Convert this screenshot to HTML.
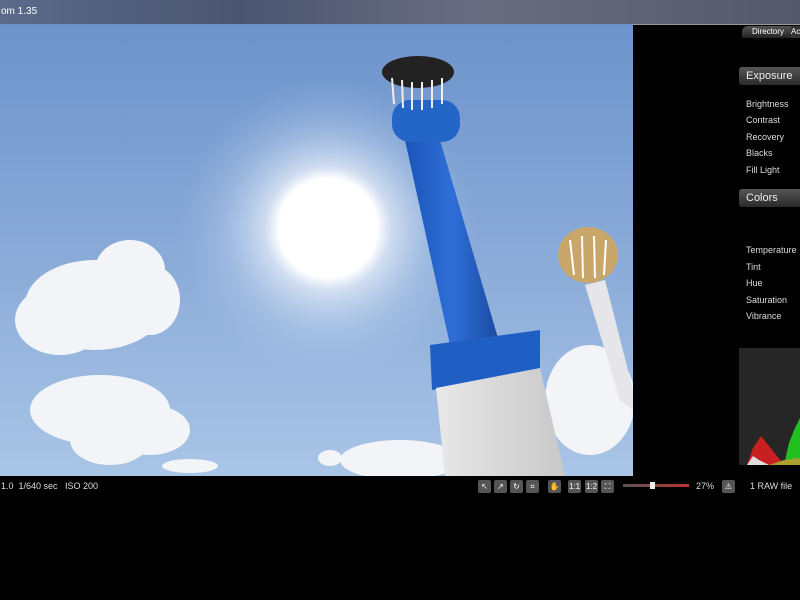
<!DOCTYPE html>
<html><head><style>
body{margin:0;width:800px;height:600px;background:#000;overflow:hidden;position:relative;font-family:"Liberation Sans",sans-serif;}
.abs{position:absolute;}
.title{left:0;top:0;width:800px;height:24px;background:linear-gradient(90deg,#5a6a8a,#4a5570 30%,#6a6d80 60%,#55586a);border-bottom:1px solid #999;}
.title span{position:absolute;left:1px;top:6px;color:#fff;font-size:10px;}
.photo{left:0;top:24px;width:633px;height:452px;background:linear-gradient(180deg,#6d93cb 0%,#89aad8 50%,#a9c5e6 100%);overflow:hidden;}
.lbl{color:#ddd;font-size:9px;position:absolute;left:746px;}
.hdr{position:absolute;left:739px;width:61px;height:18px;background:linear-gradient(180deg,#555,#2a2a2a);color:#eee;font-size:11px;padding-left:7px;line-height:18px;border-radius:3px 0 0 3px;}
.btn{position:absolute;top:480px;width:13px;height:13px;background:#555;border-radius:2px;color:#fff;font-size:8px;text-align:center;line-height:13px;}
.bar{color:#ddd;font-size:9px;position:absolute;top:481px;}
</style></head><body>
<div class="abs title"><span>om 1.35</span></div>
<div class="abs photo">
<svg width="633" height="452" viewBox="0 24 633 452">
<defs>
<radialGradient id="sun" cx="328" cy="228" r="150" gradientUnits="userSpaceOnUse">
<stop offset="0" stop-color="#fff"/><stop offset="0.33" stop-color="#fff"/><stop offset="0.42" stop-color="#eef3fb" stop-opacity="0.7"/><stop offset="0.7" stop-color="#c8daf1" stop-opacity="0.3"/><stop offset="1" stop-color="#a8c4e8" stop-opacity="0"/></radialGradient>
<linearGradient id="tw" x1="0" x2="1"><stop offset="0" stop-color="#1a55b8"/><stop offset="0.5" stop-color="#2f6fd8"/><stop offset="1" stop-color="#1a4aa0"/></linearGradient>
<linearGradient id="wt" x1="0" x2="1"><stop offset="0" stop-color="#e8e8e8"/><stop offset="1" stop-color="#c8c8c8"/></linearGradient>
</defs>
<circle cx="328" cy="228" r="150" fill="url(#sun)"/>
<g fill="#f2f4f8">
<ellipse cx="95" cy="305" rx="70" ry="45"/><ellipse cx="130" cy="270" rx="35" ry="30"/><ellipse cx="60" cy="320" rx="45" ry="35"/><ellipse cx="150" cy="300" rx="30" ry="35"/>
<ellipse cx="100" cy="410" rx="70" ry="35"/><ellipse cx="150" cy="430" rx="40" ry="25"/><ellipse cx="110" cy="440" rx="40" ry="25"/><ellipse cx="190" cy="466" rx="28" ry="7"/>
<ellipse cx="590" cy="400" rx="45" ry="55"/><ellipse cx="400" cy="460" rx="60" ry="20"/><ellipse cx="330" cy="458" rx="12" ry="8"/>
</g>
<polygon points="405,140 440,140 500,345 450,345" fill="url(#tw)"/>
<rect x="392" y="100" width="68" height="42" rx="18" fill="#2466c8"/>
<ellipse cx="418" cy="72" rx="36" ry="16" fill="#222"/>
<g stroke="#eee" stroke-width="2"><line x1="392" y1="78" x2="394" y2="104"/><line x1="402" y1="80" x2="403" y2="108"/><line x1="412" y1="82" x2="412" y2="110"/><line x1="422" y1="82" x2="422" y2="110"/><line x1="432" y1="80" x2="432" y2="108"/><line x1="442" y1="78" x2="442" y2="104"/></g>
<path d="M430 345 L540 330 L540 370 L432 390 Z" fill="#1f5fc4"/>
<polygon points="436,388 540,368 565,476 445,476" fill="url(#wt)"/>
<polygon points="585,285 605,280 633,390 633,410 620,400" fill="#e6e6ea"/>
<ellipse cx="588" cy="255" rx="30" ry="28" fill="#c9a66a"/>
<g stroke="#fff" stroke-width="2"><line x1="570" y1="240" x2="574" y2="275"/><line x1="582" y1="236" x2="583" y2="278"/><line x1="594" y1="236" x2="595" y2="278"/><line x1="606" y1="240" x2="604" y2="275"/></g>
</svg>
</div>
<div class="abs" style="left:742px;top:26px;width:46px;height:12px;background:linear-gradient(#555,#222);border-radius:6px 0 0 0;color:#fff;font-size:8px;padding-left:10px;line-height:12px;">Directory</div>
<div class="abs" style="left:791px;top:26px;width:9px;height:12px;background:#333;color:#fff;font-size:8px;line-height:12px;">Ac</div>
<div class="hdr" style="top:67px">Exposure</div>
<div class="lbl" style="top:99px">Brightness</div>
<div class="lbl" style="top:115px">Contrast</div>
<div class="lbl" style="top:132px">Recovery</div>
<div class="lbl" style="top:148px">Blacks</div>
<div class="lbl" style="top:165px">Fill Light</div>
<div class="hdr" style="top:189px">Colors</div>
<div class="lbl" style="top:245px">Temperature</div>
<div class="lbl" style="top:262px">Tint</div>
<div class="lbl" style="top:278px">Hue</div>
<div class="lbl" style="top:295px">Saturation</div>
<div class="lbl" style="top:311px">Vibrance</div>
<div class="abs" style="left:739px;top:348px;width:61px;height:117px;background:#262626;overflow:hidden">
<svg width="61" height="117" style="display:block"><polygon points="8,117 14,100 22,88 30,98 38,108 45,117" fill="#c82020"/><polygon points="45,117 50,95 56,80 61,70 61,117" fill="#20c020"/><polygon points="8,117 14,108 20,112 30,117" fill="#ddd"/><polygon points="30,117 45,112 61,110 61,117" fill="#aaa030"/></svg></div>
<div class="bar" style="left:1px">1.0 &nbsp;1/640 sec &nbsp;&nbsp;ISO 200</div>
<div class="btn" style="left:478px">↖</div><div class="btn" style="left:494px">↗</div><div class="btn" style="left:510px">↻</div><div class="btn" style="left:526px">⌗</div>
<div class="btn" style="left:548px">✋</div><div class="btn" style="left:568px">1:1</div><div class="btn" style="left:585px">1:2</div><div class="btn" style="left:601px">⛶</div>
<div class="abs" style="left:623px;top:484px;width:66px;height:3px;background:linear-gradient(90deg,#555,#b33)"></div>
<div class="abs" style="left:650px;top:482px;width:5px;height:7px;background:#eee"></div>
<div class="bar" style="left:696px">27%</div>
<div class="btn" style="left:722px">⚠</div>
<div class="bar" style="left:750px">1 RAW file</div>
</body></html>
